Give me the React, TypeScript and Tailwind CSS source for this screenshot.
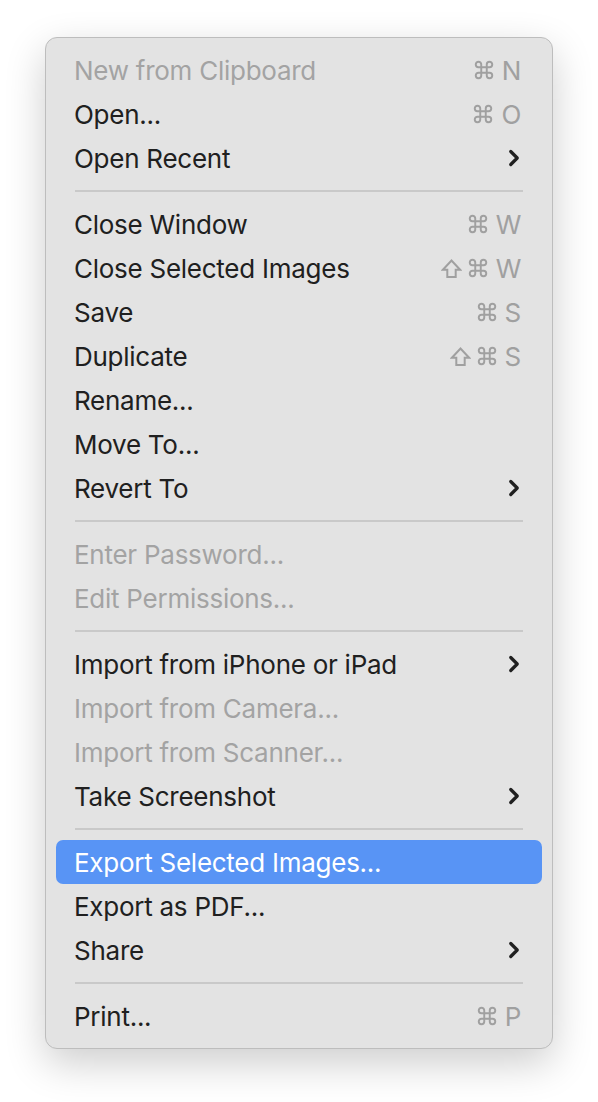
import { ChevronRight } from "lucide-react";

type Item =
  | { sep: true }
  | {
      sep?: false;
      label: string;
      disabled?: boolean;
      active?: boolean;
      shift?: boolean;
      key?: string;
      submenu?: boolean;
    };

const items: Item[] = [
  { label: "New from Clipboard", disabled: true, key: "N" },
  { label: "Open...", key: "O" },
  { label: "Open Recent", submenu: true },
  { sep: true },
  { label: "Close Window", key: "W" },
  { label: "Close Selected Images", shift: true, key: "W" },
  { label: "Save", key: "S" },
  { label: "Duplicate", shift: true, key: "S" },
  { label: "Rename..." },
  { label: "Move To..." },
  { label: "Revert To", submenu: true },
  { sep: true },
  { label: "Enter Password...", disabled: true },
  { label: "Edit Permissions...", disabled: true },
  { sep: true },
  { label: "Import from iPhone or iPad", submenu: true },
  { label: "Import from Camera...", disabled: true },
  { label: "Import from Scanner...", disabled: true },
  { label: "Take Screenshot", submenu: true },
  { sep: true },
  { label: "Export Selected Images...", active: true },
  { label: "Export as PDF..." },
  { label: "Share", submenu: true },
  { sep: true },
  { label: "Print...", key: "P" },
];

function CommandGlyph() {
  return (
    <svg width="22" height="22" viewBox="0 0 24 24" fill="none" stroke="currentColor" strokeWidth="2.1">
      <path d="M15 6v12a3 3 0 1 0 3-3H6a3 3 0 1 0 3 3V6a3 3 0 1 0-3 3h12a3 3 0 1 0-3-3" />
    </svg>
  );
}

function ShiftGlyph() {
  return (
    <svg width="21" height="21" viewBox="0 0 20 20" fill="none" stroke="currentColor" strokeWidth="1.9" strokeLinejoin="miter">
      <path d="M6 18.2v-7H1.8L10 2.4l8.2 8.8H14v7z" />
    </svg>
  );
}

export default function App() {
  return (
    <div className="min-h-screen bg-white pt-[37px]" style={{ fontFamily: "Inter, 'Noto Sans', sans-serif" }}>
      <div className="mx-auto w-[508px] rounded-[12px] border border-[#bdbdbd] bg-[#e3e3e3] px-[10px] pt-[10px] pb-[10px] shadow-[0_14px_40px_rgba(0,0,0,0.2)]">
        {items.map((item, i) =>
          item.sep ? (
            <div key={i} className="flex h-[22px] items-center px-[19px]">
              <div className="h-[2px] w-full bg-[#c9c9c9]" />
            </div>
          ) : (
            <div
              key={i}
              className={
                "flex h-[44px] items-center justify-between rounded-[7px] pl-[18px] pr-[21px] text-[26px] tracking-[-0.01em] " +
                (item.active
                  ? "bg-[#5894f5] text-white"
                  : item.disabled
                  ? "text-[#a3a3a3]"
                  : "text-[#202020]")
              }
            >
              <span>{item.label}</span>
              {item.key && (
                <span className={"flex items-center " + (item.active ? "text-white" : "text-[#a0a0a0]")}>
                  {item.shift && <ShiftGlyph />}
                  <span className={item.shift ? "ml-[5px]" : ""}>
                    <CommandGlyph />
                  </span>
                  <span className="ml-[7px]">{item.key}</span>
                </span>
              )}
              {item.submenu && <ChevronRight className="mr-[-6px] h-[26px] w-[26px] text-[#202020]" strokeWidth={3} />}
            </div>
          )
        )}
      </div>
    </div>
  );
}
